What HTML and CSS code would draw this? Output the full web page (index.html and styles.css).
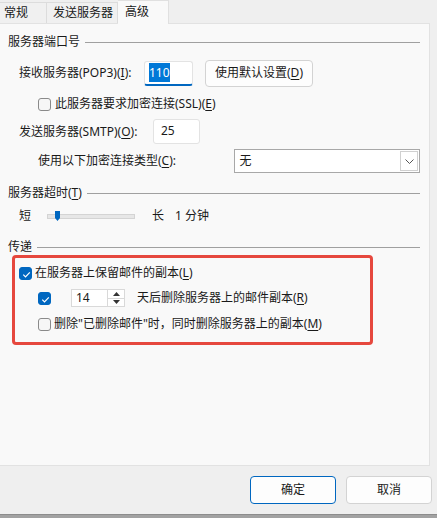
FILE: index.html
```html
<!DOCTYPE html>
<html>
<head>
<meta charset="utf-8">
<title>高级</title>
<link rel="stylesheet" href="styles.css">
</head>
<body>
<div class="dialog">

<div class="tabs">
<div class="tab tab-general">常规</div>
<div class="tab tab-send">发送服务器</div>
<div class="tab tab-adv active">高级</div>
</div>

<div class="panel">

<div class="group-title">服务器端口号</div>

<div class="row row-pop3">
<span class="lbl lbl-pop3">接收服务器(POP3)(<u>I</u>):</span>
<div class="textbox tb-pop3 focused"><span class="selected-text">110</span></div>
<div class="btn btn-default">使用默认设置(<u>D</u>)</div>
</div>

<div class="row row-ssl">
<span class="check"></span>
<span class="check-text">此服务器要求加密连接(SSL)(<u>E</u>)</span>
</div>

<div class="row row-smtp">
<span class="lbl lbl-smtp">发送服务器(SMTP)(<u>O</u>):</span>
<div class="textbox tb-smtp">25</div>
</div>

<div class="row row-enc">
<span class="lbl lbl-enc">使用以下加密连接类型(<u>C</u>):</span>
<div class="combo">
<span class="combo-text">无</span>
<span class="combo-btn"><svg width="9" height="5" viewBox="0 0 9 5"><path d="M0.5 0.5 L4.5 4.5 L8.5 0.5" fill="none" stroke="#555" stroke-width="1"/></svg></span>
</div>
</div>

<div class="group-title g-timeout">服务器超时(<u>T</u>)</div>

<div class="row row-slider">
<span class="lbl-short">短</span>
<div class="track">
<svg class="thumb" width="5" height="10" viewBox="0 0 5 10"><path d="M0 0 H5 V7 L2.5 10 L0 7 Z" fill="#0067c0"/></svg>
</div>
<span class="lbl-long">长</span>
<span class="lbl-min">1 分钟</span>
</div>

<div class="group-title g-deliver">传递</div>

<div class="highlight">
<div class="row row-keep">
<span class="check on"><svg width="13" height="13" viewBox="0 0 13 13"><path d="M3.3 6.7 L5.5 8.9 L9.8 4.3" fill="none" stroke="#fff" stroke-width="1.2"/></svg></span>
<span class="check-text">在服务器上保留邮件的副本(<u>L</u>)</span>
</div>
<div class="row row-days">
<span class="check on"><svg width="13" height="13" viewBox="0 0 13 13"><path d="M3.3 6.7 L5.5 8.9 L9.8 4.3" fill="none" stroke="#fff" stroke-width="1.2"/></svg></span>
<div class="spin">
<span class="spin-value">14</span>
<div class="spin-btns">
<span class="spin-up"><svg width="7" height="4" viewBox="0 0 7 4"><path d="M0 4 L3.5 0 L7 4 Z" fill="#333"/></svg></span>
<span class="spin-down"><svg width="7" height="4" viewBox="0 0 7 4"><path d="M0 0 L3.5 4 L7 0 Z" fill="#333"/></svg></span>
</div>
</div>
<span class="days-text">天后删除服务器上的邮件副本(<u>R</u>)</span>
</div>
<div class="row row-del">
<span class="check"></span>
<span class="check-text">删除"已删除邮件"时，同时删除服务器上的副本(<u>M</u>)</span>
</div>
</div>

</div>

<div class="footer">
<div class="btn btn-ok">确定</div>
<div class="btn btn-cancel">取消</div>
</div>

</div>
<div class="taskbar"></div>
</body>
</html>
```

FILE: styles.css
```css
*{box-sizing:border-box;}
html,body{margin:0;padding:0;}
body{
width:437px;
height:518px;
overflow:hidden;
background:#efefef;
font-family:"Noto Sans","Noto Sans CJK SC",sans-serif;
font-size:12px;
line-height:16px;
color:#1a1a1a;
}
u{text-decoration:underline;text-underline-offset:2px;text-decoration-thickness:1px;}

.dialog{display:flex;flex-direction:column;height:514px;}

/* tabs */
.tabs{display:flex;align-items:flex-end;height:23px;}
.tab{
height:21px;
line-height:19px;
border:1px solid #dcdcdc;
border-bottom:none;
background:#f0f0f0;
white-space:nowrap;
}
.tab-general{width:47px;padding-left:4px;border-left:none;}
.tab-send{width:71px;padding-left:6px;border-left:none;}
.tab-adv{width:51px;padding-left:7px;border-left:none;}
.tab.active{
height:24px;
margin-bottom:-1px;
line-height:21px;
background:#f9f9f9;
border-color:#e0e0e0;
position:relative;
z-index:1;
}

/* panel */
.panel{
width:430px;
height:443px;
background:#f9f9f9;
border:1px solid #e2e2e2;
border-left:none;
padding:0 9px 0 8px;
}

.group-title{
display:flex;
align-items:center;
height:16px;
margin-top:10px;
white-space:nowrap;
}
.group-title::after{
content:"";
flex:1;
height:1px;
background:#a0a0a0;
margin-left:5px;
}
.g-timeout{margin-top:12px;}
.g-deliver{margin-top:15px;}

.row{display:flex;align-items:center;white-space:nowrap;}
.row-pop3{height:30px;margin-top:8px;padding-left:11px;}
.row-ssl{height:16px;margin-top:8px;padding-left:30px;}
.row-smtp{height:27px;margin-top:6px;padding-left:11px;}
.row-enc{height:24px;margin-top:4px;padding-left:30px;}
.row-slider{height:16px;margin-top:7px;padding-left:11px;}

.lbl-pop3{width:125px;}
.lbl-smtp{width:134px;}
.lbl-enc{width:197px;}

.textbox{
height:25px;
background:#fff;
border:1px solid #e3e3e3;
border-radius:3px;
padding:3px 0 0 4px;
}
.tb-pop3{width:49px;}
.tb-pop3.focused{border-bottom:2px solid #0067c0;}
.tb-smtp{width:47px;padding-left:7px;}
.selected-text{background:#0078d7;color:#fff;padding:1px 0;}

.btn{
display:flex;
justify-content:center;
align-items:center;
background:#fdfdfd;
border:1px solid #d3d3d3;
border-radius:4px;
}
.btn-default{width:108px;height:27px;margin-left:12px;}

.check{
display:inline-block;
width:13px;
height:13px;
border:1px solid #8a8a8a;
border-radius:3px;
background:#f6f6f6;
flex:none;
}
.check svg{display:block;}
.check.on{background:#0067c0;border-color:#0067c0;}
.row-ssl .check-text{margin-left:4px;}

.combo{
display:flex;
align-items:center;
justify-content:space-between;
width:186px;
height:24px;
background:#fff;
border:1px solid #a8a8a8;
padding:0 1px 0 4px;
}
.combo-btn{
display:flex;
align-items:center;
justify-content:center;
width:18px;
height:20px;
border:1px solid #d0d0d0;
background:#fff;
}

.lbl-short{width:16px;}
.track{
position:relative;
width:88px;
height:5px;
background:#e7e7e7;
border:1px solid #d4d4d4;
margin-left:12px;
}
.thumb{position:absolute;left:7px;top:-4px;}
.lbl-long{margin-left:17px;}
.lbl-min{margin-left:11px;}

/* annotated block */
.highlight{
width:361px;
height:90px;
margin-left:4px;
border:3px solid #e6483e;
border-radius:4px;
padding:6px 0 0 4px;
}
.row-keep{height:18px;}
.row-keep .check-text{margin-left:3px;}
.row-days{height:18px;margin-top:7px;padding-left:19px;}
.row-del{height:18px;margin-top:8px;padding-left:19px;}
.row-del .check-text{margin-left:3px;}

.spin{
display:flex;
width:54px;
height:18px;
margin-left:20px;
background:#fff;
border:1px solid #d9d9d9;
}
.spin-value{flex:1;padding-left:4px;line-height:16px;}
.spin-btns{display:flex;flex-direction:column;width:17px;border-left:1px solid #d9d9d9;}
.spin-up,.spin-down{flex:1;display:flex;align-items:center;justify-content:center;}
.spin-up{border-bottom:1px solid #d9d9d9;}
.days-text{margin-left:12px;}

/* footer */
.footer{
display:flex;
justify-content:flex-end;
gap:10px;
height:48px;
padding:10px 5px 0 0;
}
.btn-ok,.btn-cancel{width:86px;height:28px;}
.btn-ok{border-color:#0067c0;}

.taskbar{height:4px;background:#a2a2a2;border-top:1px solid #8c8c8c;}
```
